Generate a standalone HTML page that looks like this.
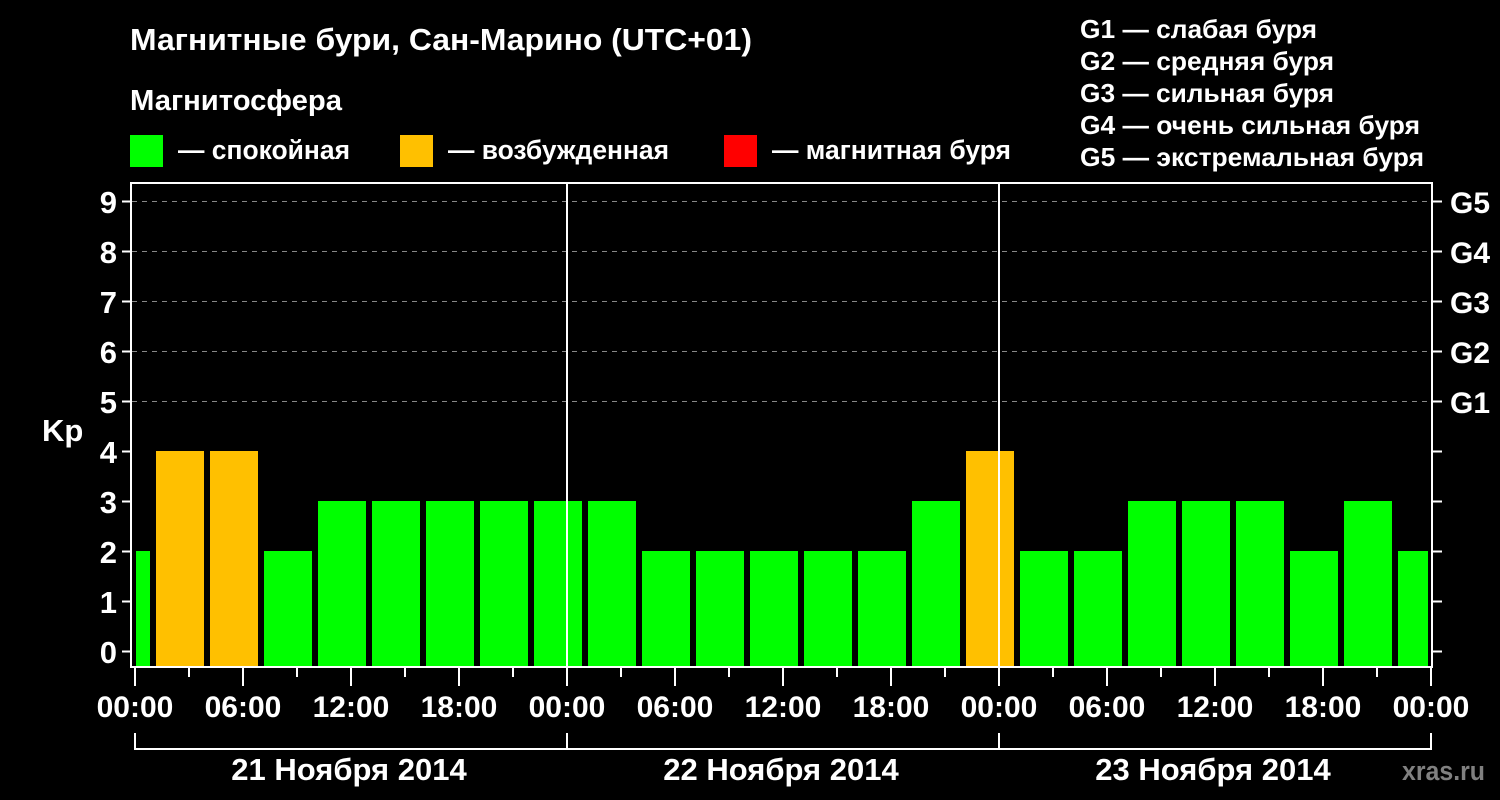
<!DOCTYPE html>
<html><head><meta charset="utf-8"><style>
html,body{margin:0;padding:0;background:#000;}
svg{display:block;}
text{font-family:"Liberation Sans",sans-serif;font-weight:bold;fill:#fff;}
</style></head><body>
<svg width="1500" height="800" viewBox="0 0 1500 800" xmlns="http://www.w3.org/2000/svg">
<rect width="1500" height="800" fill="#000"/>
<text x="130" y="50" font-size="31" textLength="622" lengthAdjust="spacingAndGlyphs">Магнитные бури, Сан-Марино (UTC+01)</text>
<text x="130" y="110" font-size="29" textLength="212" lengthAdjust="spacingAndGlyphs">Магнитосфера</text>
<rect x="130" y="135" width="33" height="32" fill="#00ff00"/>
<text x="178" y="159" font-size="27" textLength="172" lengthAdjust="spacingAndGlyphs">— спокойная</text>
<rect x="400" y="135" width="33" height="32" fill="#ffc000"/>
<text x="448" y="159" font-size="27" textLength="221" lengthAdjust="spacingAndGlyphs">— возбужденная</text>
<rect x="724" y="135" width="33" height="32" fill="#ff0000"/>
<text x="772" y="159" font-size="27" textLength="239" lengthAdjust="spacingAndGlyphs">— магнитная буря</text>
<g font-size="26">
<text x="1080" y="38" textLength="237" lengthAdjust="spacingAndGlyphs">G1 — слабая буря</text>
<text x="1080" y="70" textLength="254" lengthAdjust="spacingAndGlyphs">G2 — средняя буря</text>
<text x="1080" y="102" textLength="254" lengthAdjust="spacingAndGlyphs">G3 — сильная буря</text>
<text x="1080" y="134" textLength="340" lengthAdjust="spacingAndGlyphs">G4 — очень сильная буря</text>
<text x="1080" y="166" textLength="344" lengthAdjust="spacingAndGlyphs">G5 — экстремальная буря</text>
</g>
<g stroke="#888" stroke-width="1" stroke-dasharray="5,5">
<line x1="132" y1="201.5" x2="1432" y2="201.5"/>
<line x1="132" y1="251.5" x2="1432" y2="251.5"/>
<line x1="132" y1="301.5" x2="1432" y2="301.5"/>
<line x1="132" y1="351.5" x2="1432" y2="351.5"/>
<line x1="132" y1="401.5" x2="1432" y2="401.5"/>
</g>
<g fill="#00ff00">
<rect x="136" y="551" width="14" height="116"/>
<rect x="264" y="551" width="48" height="116"/>
<rect x="318" y="501" width="48" height="166"/>
<rect x="372" y="501" width="48" height="166"/>
<rect x="426" y="501" width="48" height="166"/>
<rect x="480" y="501" width="48" height="166"/>
<rect x="534" y="501" width="48" height="166"/>
<rect x="588" y="501" width="48" height="166"/>
<rect x="642" y="551" width="48" height="116"/>
<rect x="696" y="551" width="48" height="116"/>
<rect x="750" y="551" width="48" height="116"/>
<rect x="804" y="551" width="48" height="116"/>
<rect x="858" y="551" width="48" height="116"/>
<rect x="912" y="501" width="48" height="166"/>
<rect x="1020" y="551" width="48" height="116"/>
<rect x="1074" y="551" width="48" height="116"/>
<rect x="1128" y="501" width="48" height="166"/>
<rect x="1182" y="501" width="48" height="166"/>
<rect x="1236" y="501" width="48" height="166"/>
<rect x="1290" y="551" width="48" height="116"/>
<rect x="1344" y="501" width="48" height="166"/>
<rect x="1398" y="551" width="30" height="116"/>
</g>
<g fill="#ffc000">
<rect x="156" y="451" width="48" height="216"/>
<rect x="210" y="451" width="48" height="216"/>
<rect x="966" y="451" width="48" height="216"/>
</g>
<g stroke="#fff" stroke-width="2" fill="none">
<rect x="131" y="183" width="1301" height="484"/>
<line x1="567" y1="183" x2="567" y2="667"/>
<line x1="999" y1="183" x2="999" y2="667"/>
</g>
<g stroke="#fff" stroke-width="2">
<line x1="122" y1="201.5" x2="131" y2="201.5"/><line x1="122" y1="251.5" x2="131" y2="251.5"/>
<line x1="122" y1="301.5" x2="131" y2="301.5"/><line x1="122" y1="351.5" x2="131" y2="351.5"/>
<line x1="122" y1="401.5" x2="131" y2="401.5"/><line x1="122" y1="451.5" x2="131" y2="451.5"/>
<line x1="122" y1="501.5" x2="131" y2="501.5"/><line x1="122" y1="551.5" x2="131" y2="551.5"/>
<line x1="122" y1="601.5" x2="131" y2="601.5"/><line x1="122" y1="651.5" x2="131" y2="651.5"/>
<line x1="1432" y1="201.5" x2="1442" y2="201.5"/><line x1="1432" y1="251.5" x2="1442" y2="251.5"/>
<line x1="1432" y1="301.5" x2="1442" y2="301.5"/><line x1="1432" y1="351.5" x2="1442" y2="351.5"/>
<line x1="1432" y1="401.5" x2="1442" y2="401.5"/><line x1="1432" y1="451.5" x2="1442" y2="451.5"/>
<line x1="1432" y1="501.5" x2="1442" y2="501.5"/><line x1="1432" y1="551.5" x2="1442" y2="551.5"/>
<line x1="1432" y1="601.5" x2="1442" y2="601.5"/><line x1="1432" y1="651.5" x2="1442" y2="651.5"/>
</g>
<g font-size="31" text-anchor="end">
<text x="117" y="213">9</text><text x="117" y="263">8</text><text x="117" y="313">7</text>
<text x="117" y="363">6</text><text x="117" y="413">5</text><text x="117" y="463">4</text>
<text x="117" y="513">3</text><text x="117" y="563">2</text><text x="117" y="613">1</text>
<text x="117" y="663">0</text>
</g>
<text x="42" y="441" font-size="31">Kp</text>
<g font-size="30">
<text x="1450" y="213">G5</text><text x="1450" y="263">G4</text><text x="1450" y="313">G3</text>
<text x="1450" y="363">G2</text><text x="1450" y="413">G1</text>
</g>
<g stroke="#fff" stroke-width="2">
<line x1="135" y1="668" x2="135" y2="686"/><line x1="189" y1="668" x2="189" y2="677"/>
<line x1="243" y1="668" x2="243" y2="686"/><line x1="297" y1="668" x2="297" y2="677"/>
<line x1="351" y1="668" x2="351" y2="686"/><line x1="405" y1="668" x2="405" y2="677"/>
<line x1="459" y1="668" x2="459" y2="686"/><line x1="513" y1="668" x2="513" y2="677"/>
<line x1="567" y1="668" x2="567" y2="686"/><line x1="621" y1="668" x2="621" y2="677"/>
<line x1="675" y1="668" x2="675" y2="686"/><line x1="729" y1="668" x2="729" y2="677"/>
<line x1="783" y1="668" x2="783" y2="686"/><line x1="837" y1="668" x2="837" y2="677"/>
<line x1="891" y1="668" x2="891" y2="686"/><line x1="945" y1="668" x2="945" y2="677"/>
<line x1="999" y1="668" x2="999" y2="686"/><line x1="1053" y1="668" x2="1053" y2="677"/>
<line x1="1107" y1="668" x2="1107" y2="686"/><line x1="1161" y1="668" x2="1161" y2="677"/>
<line x1="1215" y1="668" x2="1215" y2="686"/><line x1="1269" y1="668" x2="1269" y2="677"/>
<line x1="1323" y1="668" x2="1323" y2="686"/><line x1="1377" y1="668" x2="1377" y2="677"/>
<line x1="1431" y1="668" x2="1431" y2="686"/>
</g>
<g font-size="30" text-anchor="middle">
<text x="135" y="717">00:00</text><text x="243" y="717">06:00</text><text x="351" y="717">12:00</text>
<text x="459" y="717">18:00</text><text x="567" y="717">00:00</text><text x="675" y="717">06:00</text>
<text x="783" y="717">12:00</text><text x="891" y="717">18:00</text><text x="999" y="717">00:00</text>
<text x="1107" y="717">06:00</text><text x="1215" y="717">12:00</text><text x="1323" y="717">18:00</text>
<text x="1431" y="717">00:00</text>
</g>
<g stroke="#fff" stroke-width="2" fill="none">
<path d="M135 733 V749 H1431 V733 M567 733 V749 M999 733 V749"/>
</g>
<g font-size="31" text-anchor="middle">
<text x="349" y="780">21 Ноября 2014</text>
<text x="781" y="780">22 Ноября 2014</text>
<text x="1213" y="780">23 Ноября 2014</text>
</g>
<text x="1402" y="780" font-size="27" textLength="83" lengthAdjust="spacingAndGlyphs" style="fill:#808080">xras.ru</text>
</svg>
</body></html>
